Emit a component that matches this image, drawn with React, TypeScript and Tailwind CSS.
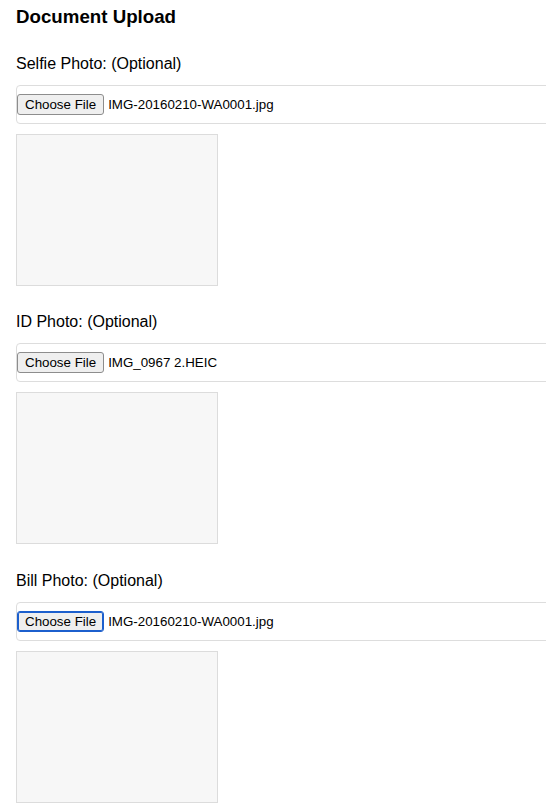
import React from "react";

type Item = { label: string; file: string; focused?: boolean; mt: string };

const items: Item[] = [
  { label: "Selfie Photo: (Optional)", file: "IMG-20160210-WA0001.jpg", mt: "mt-[26px]" },
  { label: "ID Photo: (Optional)", file: "IMG_0967 2.HEIC", mt: "mt-[26px]" },
  { label: "Bill Photo: (Optional)", file: "IMG-20160210-WA0001.jpg", focused: true, mt: "mt-[27px]" },
];

function Section({ item }: { item: Item }) {
  return (
    <div className={item.mt}>
      <div className="text-[16px] leading-[20px] text-black">{item.label}</div>
      <div className="mt-[11px] flex h-[39px] w-[560px] items-center rounded-l-[4px] border border-[#dddddd] bg-white">
        <span
          className={
            "flex h-[21px] items-center rounded-[3px] border bg-[#efefef] px-[7px] text-[13.333px] leading-none text-black " +
            (item.focused
              ? "border-[#1c5fcd] shadow-[inset_0_0_0_1px_#1c5fcd]"
              : "border-[#8d8d8d]")
          }
        >
          Choose File
        </span>
        <span className="ml-[4px] text-[13.333px] leading-none text-black">{item.file}</span>
      </div>
      <div className="mt-[10px] h-[152px] w-[202px] border border-[#dcdcdc] bg-[#f7f7f7]" />
    </div>
  );
}

export default function App() {
  return (
    <div
      className="h-[811px] w-[546px] overflow-hidden bg-white px-4 pt-[6px]"
      style={{ fontFamily: '"Liberation Sans", Arial, Helvetica, sans-serif' }}
    >
      <h3 className="text-[18.72px] font-bold leading-[22px] text-black">Document Upload</h3>
      {items.map((it) => (
        <Section key={it.label} item={it} />
      ))}
    </div>
  );
}
